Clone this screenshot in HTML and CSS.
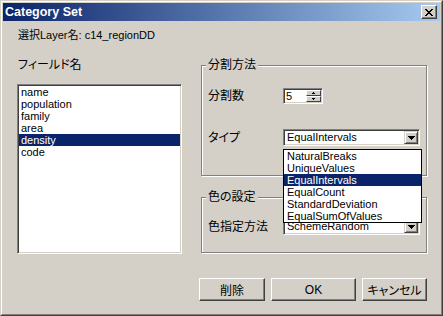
FILE: index.html
```html
<!DOCTYPE html>
<html lang="ja">
<head>
<meta charset="utf-8">
<title>Category Set</title>
<link rel="stylesheet" href="styles.css">
</head>
<body>
<div class="window">
  <div class="window-inner">
    <div class="titlebar">
      <span class="title">Category Set</span>
      <button class="close" type="button" aria-label="close">
        <svg width="8" height="7" viewBox="0 0 8 7" shape-rendering="crispEdges">
          <path d="M0 0h2v1h-2zM6 0h2v1h-2zM1 1h2v1h-2zM5 1h2v1h-2zM2 2h4v1h-4zM3 3h2v1h-2zM2 4h4v1h-4zM1 5h2v1h-2zM5 5h2v1h-2zM0 6h2v1h-2zM6 6h2v1h-2z" fill="#000"/>
        </svg>
      </button>
    </div>
    <div class="body">
      <div class="layer-label">選択Layer名: c14_regionDD</div>
      <div class="main">
        <div class="field-col">
          <div class="field-label ja">フィールド名</div>
          <ul class="listbox">
            <li>name</li>
            <li>population</li>
            <li>family</li>
            <li>area</li>
            <li class="selected">density</li>
            <li>code</li>
          </ul>
        </div>
        <div class="settings-col">
          <div class="group group-split">
            <div class="group-title ja">分割方法</div>
            <div class="row row-first">
              <span class="row-label ja">分割数</span>
              <div class="spinner">
                <span class="spin-value">5</span>
                <div class="spin-buttons">
                  <span class="spin-btn"><svg width="3" height="2" viewBox="0 0 3 2" shape-rendering="crispEdges"><path d="M1 0h1v1h-1zM0 1h3v1h-3z" fill="#000"/></svg></span>
                  <span class="spin-btn"><svg width="3" height="2" viewBox="0 0 3 2" shape-rendering="crispEdges"><path d="M0 0h3v1h-3zM1 1h1v1h-1z" fill="#000"/></svg></span>
                </div>
              </div>
            </div>
            <div class="row row-next">
              <span class="row-label ja">タイプ</span>
              <div class="combo">
                <span class="combo-value">EqualIntervals</span>
                <span class="combo-btn"><svg width="7" height="4" viewBox="0 0 7 4" shape-rendering="crispEdges"><path d="M0 0h7v1h-7zM1 1h5v1h-5zM2 2h3v1h-3zM3 3h1v1h-1z" fill="#000"/></svg></span>
                <ul class="dropdown">
                  <li>NaturalBreaks</li>
                  <li>UniqueValues</li>
                  <li class="selected">EqualIntervals</li>
                  <li>EqualCount</li>
                  <li>StandardDeviation</li>
                  <li>EqualSumOfValues</li>
                </ul>
              </div>
            </div>
          </div>
          <div class="group group-color">
            <div class="group-title ja">色の設定</div>
            <div class="row row-color">
              <span class="row-label ja">色指定方法</span>
              <div class="combo">
                <span class="combo-value">SchemeRandom</span>
                <span class="combo-btn"><svg width="7" height="4" viewBox="0 0 7 4" shape-rendering="crispEdges"><path d="M0 0h7v1h-7zM1 1h5v1h-5zM2 2h3v1h-3zM3 3h1v1h-1z" fill="#000"/></svg></span>
              </div>
            </div>
          </div>
        </div>
      </div>
      <div class="buttons">
        <button class="btn btn-delete ja" type="button">削除</button>
        <button class="btn btn-ok" type="button">OK</button>
        <button class="btn btn-cancel ja" type="button">キャンセル</button>
      </div>
    </div>
  </div>
</div>
</body>
</html>
```

FILE: styles.css
```css
* {
  box-sizing: border-box;
  margin: 0;
  padding: 0;
}

body {
  margin: 0;
  background: #d4d0c8;
  font-family: "Liberation Sans", "Noto Sans CJK JP", sans-serif;
  font-size: 11px;
  color: #000;
}

.ja {
  font-size: 12px;
  font-feature-settings: "palt";
}

.window {
  width: 443px;
  height: 316px;
  border: 1px solid;
  border-color: #d4d0c8 #404040 #404040 #d4d0c8;
  background: #d4d0c8;
}

.window-inner {
  height: 100%;
  border: 1px solid;
  border-color: #fff #808080 #808080 #fff;
  padding: 1px;
  display: flex;
  flex-direction: column;
}

.titlebar {
  height: 18px;
  flex: none;
  display: flex;
  align-items: center;
  justify-content: space-between;
  padding: 0 3px 0 2px;
  background: linear-gradient(to right, #0a246a, #a6caf0);
}

.title {
  color: #fff;
  font-weight: bold;
  font-size: 12.5px;
  line-height: 18px;
}

.close {
  width: 16px;
  height: 14px;
  background: #d4d0c8;
  border: 1px solid;
  border-color: #fff #404040 #404040 #fff;
  box-shadow: inset -1px -1px #808080;
  display: flex;
  align-items: center;
  justify-content: center;
}

.body {
  flex: 1;
  padding: 7px 13px 0 14px;
}

.layer-label {
  line-height: 14px;
  padding-left: 1px;
}

.main {
  display: flex;
  gap: 19px;
  margin-top: 16px;
}

.field-col {
  width: 165px;
}

.field-label {
  line-height: 14px;
  padding-left: 1px;
}

.listbox {
  list-style: none;
  margin-top: 12px;
  height: 170px;
  background: #fff;
  border: 1px solid;
  border-color: #808080 #fff #fff #808080;
  box-shadow: inset 1px 1px #404040, inset -1px -1px #d4d0c8;
  padding: 1px;
}

.listbox li {
  line-height: 12px;
  padding-left: 2px;
}

.selected {
  background: #0a246a;
  color: #fff;
}

.settings-col {
  width: 226px;
}

.group {
  border: 1px solid #808080;
  box-shadow: inset 1px 1px #fff, 1px 1px #fff;
  padding: 0 6px;
}

.group-split {
  margin-top: 7px;
  padding-bottom: 29px;
}

.group-color {
  margin-top: 21px;
  padding-bottom: 17px;
}

.group-title {
  width: max-content;
  margin: -8px 0 0 -2px;
  padding: 0 2px;
  line-height: 14px;
  background: #d4d0c8;
}

.row {
  display: flex;
  align-items: center;
}

.row-first {
  margin-top: 16px;
}

.row-next {
  margin-top: 25px;
}

.row-color {
  margin-top: 14px;
}

.row-label {
  width: 75px;
  flex: none;
  line-height: 14px;
}

.spinner {
  width: 40px;
  height: 16px;
  display: flex;
  background: #fff;
  border: 1px solid;
  border-color: #808080 #fff #fff #808080;
  box-shadow: inset 1px 1px #404040, inset -1px -1px #d4d0c8;
  padding: 1px;
}

.spin-value {
  flex: 1;
  padding-left: 1px;
  line-height: 12px;
}

.spin-buttons {
  width: 15px;
  display: flex;
  flex-direction: column;
}

.spin-btn {
  flex: 1;
  display: flex;
  align-items: center;
  justify-content: center;
  background: #d4d0c8;
  border: 1px solid;
  border-color: #fff #404040 #404040 #fff;
}

.combo {
  position: relative;
  width: 138px;
  height: 17px;
  display: flex;
  background: #fff;
  border: 1px solid;
  border-color: #808080 #fff #fff #808080;
  box-shadow: inset 1px 1px #404040, inset -1px -1px #d4d0c8;
  padding: 1px;
}

.combo-value {
  flex: 1;
  padding-left: 2px;
  line-height: 13px;
}

.combo-btn {
  width: 14px;
  height: 13px;
  display: flex;
  align-items: center;
  justify-content: center;
  background: #d4d0c8;
  border: 1px solid;
  border-color: #d4d0c8 #404040 #404040 #d4d0c8;
  box-shadow: inset 1px 1px #fff, inset -1px -1px #808080;
}

.dropdown {
  position: absolute;
  top: 19px;
  left: -1px;
  width: 139px;
  z-index: 5;
  list-style: none;
  background: #fff;
  border: 1px solid #000;
}

.dropdown li {
  line-height: 12px;
  padding-left: 3px;
}

.buttons {
  display: flex;
  justify-content: flex-end;
  gap: 6px;
  margin-top: 24px;
}

.btn {
  height: 23px;
  background: #d4d0c8;
  border: 1px solid;
  border-color: #fff #404040 #404040 #fff;
  box-shadow: inset -1px -1px #808080;
  font-family: "Liberation Sans", "Noto Sans CJK JP", sans-serif;
  font-size: 12px;
  color: #000;
}

.btn-delete {
  width: 66px;
}

.btn-ok {
  width: 85px;
}

.btn-cancel {
  width: 65px;
}
```
